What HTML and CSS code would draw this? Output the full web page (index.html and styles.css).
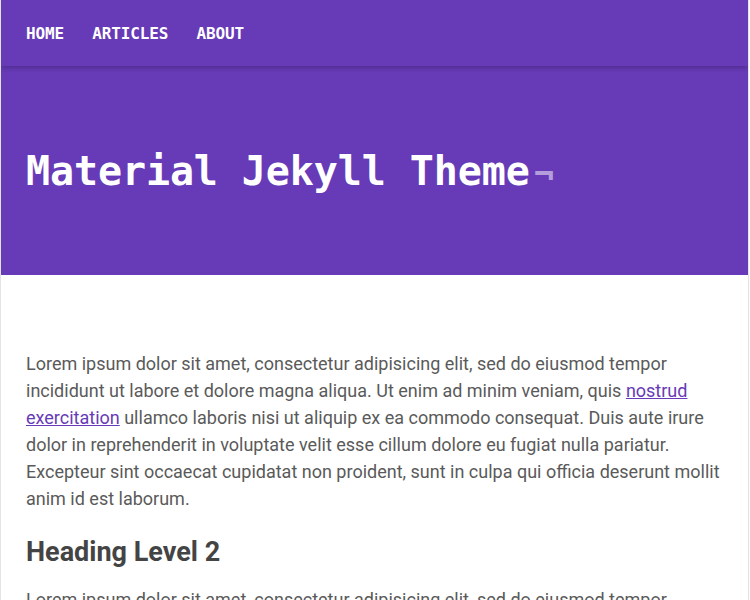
FILE: index.html
```html
<!DOCTYPE html>
<html lang="en">
<head>
<meta charset="utf-8">
<title>Material Jekyll Theme</title>
<link rel="stylesheet" href="styles.css">
</head>
<body>
<div class="page">
  <header class="hero">
    <nav class="nav">
      <a class="nav-link" href="#">HOME</a>
      <a class="nav-link" href="#">ARTICLES</a>
      <a class="nav-link" href="#">ABOUT</a>
    </nav>
    <div class="hero-body">
      <h1 class="title">Material Jekyll Theme<span class="cursor">¬</span></h1>
    </div>
  </header>
  <main class="content">
    <p class="text">Lorem ipsum dolor sit amet, consectetur adipisicing elit, sed do eiusmod tempor incididunt ut labore et dolore magna aliqua. Ut enim ad minim veniam, quis <a class="link" href="#">nostrud exercitation</a> ullamco laboris nisi ut aliquip ex ea commodo consequat. Duis aute irure dolor in reprehenderit in voluptate velit esse cillum dolore eu fugiat nulla pariatur. Excepteur sint occaecat cupidatat non proident, sunt in culpa qui officia deserunt mollit anim id est laborum.</p>
    <h2 class="heading">Heading Level 2</h2>
    <p class="text">Lorem ipsum dolor sit amet, consectetur adipisicing elit, sed do eiusmod tempor incididunt ut labore et dolore magna aliqua.</p>
  </main>
</div>
</body>
</html>
```

FILE: styles.css
```css
html, body {
  margin: 0;
  padding: 0;
  background: #ffffff;
}

.page {
  width: 747px;
  min-height: 600px;
  border-left: 1px solid #e3e3e3;
  border-right: 1px solid #e3e3e3;
  box-sizing: content-box;
  overflow: hidden;
}

.hero {
  background: #673ab7;
  display: flex;
  flex-direction: column;
}

.nav {
  height: 66px;
  display: flex;
  align-items: center;
  gap: 28px;
  padding: 0 25px;
  box-shadow: 0 2px 5px rgba(0, 0, 0, 0.22);
  position: relative;
}

.nav-link {
  font-family: "DejaVu Sans Mono", "Liberation Mono", monospace;
  font-weight: bold;
  font-size: 16px;
  color: #ffffff;
  text-decoration: none;
  letter-spacing: -0.1px;
}

.hero-body {
  height: 209px;
  display: flex;
  align-items: center;
  padding: 0 25px;
}

.title {
  margin: 0;
  font-family: "DejaVu Sans Mono", "Liberation Mono", monospace;
  font-weight: bold;
  font-size: 40px;
  line-height: 1;
  color: #ffffff;
  letter-spacing: -0.1px;
}

.cursor {
  color: #b39ddb;
  font-size: 34px;
  margin-left: 4px;
  vertical-align: -1px;
}

.content {
  padding: 75px 25px 0 25px;
}

.text {
  margin: 0;
  font-family: Roboto, "Noto Sans", sans-serif;
  font-weight: 400;
  font-size: 18px;
  line-height: 27px;
  color: #5a5a5a;
}

.link {
  color: #673ab7;
  text-decoration: underline;
}

.heading {
  margin: 25px 0 18px 0;
  font-family: Roboto, "Noto Sans", sans-serif;
  font-weight: bold;
  font-size: 27px;
  line-height: 31px;
  color: #444444;
}
```
